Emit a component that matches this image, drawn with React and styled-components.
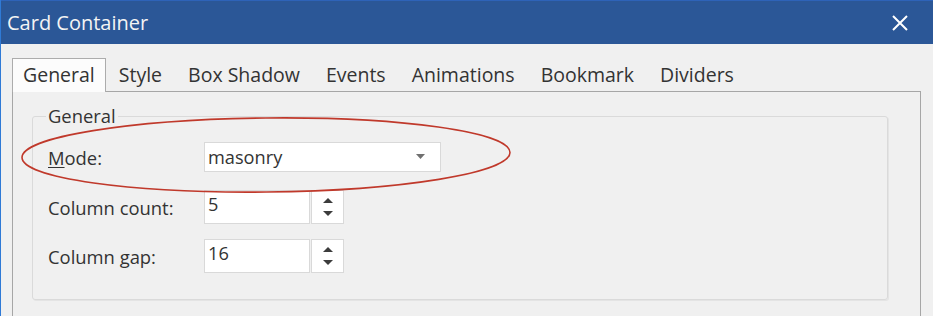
import React from "react";
import styled, { createGlobalStyle } from "styled-components";

const GlobalStyle = createGlobalStyle`
  html, body {
    margin: 0;
    padding: 0;
    background: #f0f0f0;
  }
  body {
    font-family: "Open Sans", "Noto Sans", sans-serif;
    color: #333;
  }
`;

const Window = styled.div`
  position: relative;
  width: 933px;
  height: 316px;
  overflow: hidden;
  box-sizing: border-box;
  background: #f0f0f0;
  border-left: 1px solid #2f7ad6;
`;

const TitleBar = styled.div`
  height: 44px;
  box-sizing: border-box;
  display: flex;
  align-items: center;
  justify-content: space-between;
  padding: 0 24px 0 6px;
  background: #2b5797;
  border-top: 1px solid #2e63b8;
  color: #f4f4f4;
  font-size: 20px;
`;

const CloseButton = styled.button`
  border: none;
  background: none;
  padding: 0;
  width: 18px;
  height: 18px;
  display: flex;
  align-items: center;
  justify-content: center;
  cursor: pointer;
`;

const Body = styled.div`
  padding: 14px 12px 0 11px;
`;

const TabList = styled.div`
  display: flex;
  align-items: flex-end;
  height: 33px;
`;

const Tab = styled.div`
  position: relative;
  z-index: 1;
  box-sizing: border-box;
  height: ${(p) => (p.$active ? "34px" : "33px")};
  margin-bottom: ${(p) => (p.$active ? "-1px" : "0")};
  padding: ${(p) => (p.$active ? "3px 10px 0 10px" : "3px 12px 0 12px")};
  font-size: 19.5px;
  line-height: 26px;
  color: #333;
  background: ${(p) => (p.$active ? "#fcfcfc" : "transparent")};
  border: 1px solid ${(p) => (p.$active ? "#acacac" : "transparent")};
  border-bottom: none;
  white-space: nowrap;
`;

const Panel = styled.div`
  height: 260px;
  box-sizing: border-box;
  border: 1px solid #a6a6a6;
  background: #f0f0f0;
  padding: 13px 32px 0 19px;
`;

const GroupBox = styled.fieldset`
  margin: 0;
  padding: 15px 16px 26px 15px;
  border: 1px solid #dadada;
  border-radius: 3px;
  box-shadow: 1px 1px 0 #e4e4e4;
`;

const Legend = styled.legend`
  padding: 0 2px;
  margin-left: -2px;
  font-size: 18.4px;
  line-height: 22px;
  color: #333;
`;

const FormGrid = styled.div`
  display: grid;
  grid-template-columns: 156px auto;
  align-items: center;
`;

const Label = styled.label`
  font-size: 18.4px;
  color: #333;
  margin-top: ${(p) => p.$top || 0}px;
  u {
    text-decoration-thickness: 1px;
    text-underline-offset: 2px;
  }
`;

const Select = styled.div`
  width: 237px;
  height: 30px;
  box-sizing: border-box;
  display: flex;
  align-items: center;
  justify-content: space-between;
  padding: 0 15px 1px 3px;
  background: #fff;
  border: 1px solid #d9d9d9;
  font-size: 18.2px;
  color: #333;
`;

const SpinBox = styled.div`
  display: flex;
  gap: 1px;
  height: 34px;
  margin-top: ${(p) => p.$top || 0}px;
`;

const NumberField = styled.div`
  width: 106px;
  box-sizing: border-box;
  padding: 1px 3px 0;
  background: #fff;
  border: 1px solid #d9d9d9;
  font-size: 18.2px;
  color: #333;
  line-height: 24px;
`;

const SpinButtons = styled.div`
  width: 33px;
  box-sizing: border-box;
  background: #fff;
  border: 1px solid #d9d9d9;
  display: flex;
  flex-direction: column;
  align-items: center;
  justify-content: center;
  gap: 8px;
`;

const Overlay = styled.svg`
  position: absolute;
  left: -1px;
  top: 0;
  pointer-events: none;
`;

const tabs = ["General", "Style", "Box Shadow", "Events", "Animations", "Bookmark", "Dividers"];

function Triangle({ up, color = "#3c3c3c", w = 10, h = 5 }) {
  return (
    <svg width={w} height={h} viewBox={`0 0 ${w} ${h}`}>
      <polygon
        points={up ? `0,${h} ${w},${h} ${w / 2},0` : `0,0 ${w},0 ${w / 2},${h}`}
        fill={color}
      />
    </svg>
  );
}

function Spinner({ value, top }) {
  return (
    <SpinBox $top={top}>
      <NumberField>{value}</NumberField>
      <SpinButtons>
        <Triangle up />
        <Triangle />
      </SpinButtons>
    </SpinBox>
  );
}

export default function App() {
  return (
    <>
      <GlobalStyle />
      <Window>
        <TitleBar>
          <span>Card Container</span>
          <CloseButton aria-label="Close">
            <svg width="16" height="16" viewBox="0 0 16 16">
              <path d="M1 1 L15 15 M15 1 L1 15" stroke="#fff" strokeWidth="2" />
            </svg>
          </CloseButton>
        </TitleBar>
        <Body>
          <TabList>
            {tabs.map((t, i) => (
              <Tab key={t} $active={i === 0}>
                {t}
              </Tab>
            ))}
          </TabList>
          <Panel>
            <GroupBox>
              <Legend>General</Legend>
              <FormGrid>
                <Label>
                  <u>M</u>ode:
                </Label>
                <Select>
                  <span>masonry</span>
                  <Triangle color="#707070" w={9} h={5} />
                </Select>
                <Label $top={18}>Column count:</Label>
                <Spinner value="5" top={18} />
                <Label $top={15}>Column gap:</Label>
                <Spinner value="16" top={15} />
              </FormGrid>
            </GroupBox>
          </Panel>
        </Body>
        <Overlay width="933" height="316">
          <ellipse
            cx="266"
            cy="155"
            rx="244"
            ry="37"
            fill="none"
            stroke="#c0392b"
            strokeWidth="1.6"
            transform="rotate(-0.6 266 155)"
          />
        </Overlay>
      </Window>
    </>
  );
}
